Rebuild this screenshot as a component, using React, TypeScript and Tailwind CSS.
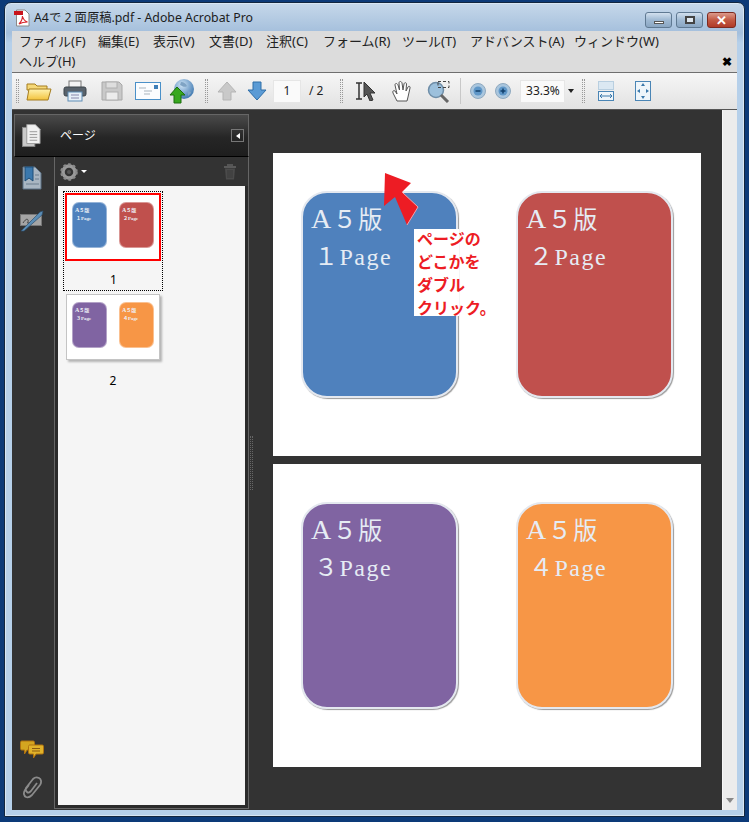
import React from 'react';

const uiFont = "font-['Noto_Sans','Noto_Sans_CJK_JP',sans-serif]";

const sheets = [
  [
    { label: 'A５版', page: '１Page', color: 'bg-[#4f81bd]' },
    { label: 'A５版', page: '２Page', color: 'bg-[#c0504d]' },
  ],
  [
    { label: 'A５版', page: '３Page', color: 'bg-[#8064a2]' },
    { label: 'A５版', page: '４Page', color: 'bg-[#f79646]' },
  ],
];

const menus = [
  { name: 'ファイル(F)', w: 'w-[79px]' },
  { name: '編集(E)', w: 'w-[55px]' },
  { name: '表示(V)', w: 'w-[56px]' },
  { name: '文書(D)', w: 'w-[57px]' },
  { name: '注釈(C)', w: 'w-[57px]' },
  { name: 'フォーム(R)', w: 'w-[79px]' },
  { name: 'ツール(T)', w: 'w-[68px]' },
  { name: 'アドバンスト(A)', w: 'w-[104px]' },
  { name: 'ウィンドウ(W)', w: 'w-[90px]' },
];

const Grip = ({ className }: { className: string }) => (
  <div className={`h-[24px] w-[3px] border-x border-dotted border-[#999] ${className}`}></div>
);

const PdfIcon = () => (
  <svg width="16" height="18" viewBox="0 0 16 18">
    <path d="M2.5 1H11l4 4v12H2.5z" fill="#fff" stroke="#8a8a8a" />
    <rect x="0" y="2" width="9" height="4" fill="#c8141c" />
    <path d="M5 15c2-2 3.5-5 3.5-8 .5 3 2 5 5 6-3 0-6 .5-8.500 2z" fill="none" stroke="#d8262c" strokeWidth="1.2" />
  </svg>
);

const Folder = () => (
  <svg width="26" height="22" viewBox="0 0 26 22">
    <defs>
      <linearGradient id="fold" x1="0" y1="0" x2="0" y2="1">
        <stop offset="0" stopColor="#fff3b0" />
        <stop offset="1" stopColor="#f2c23c" />
      </linearGradient>
    </defs>
    <path d="M1 4h8l2 2h10v4H1z" fill="#f5d878" stroke="#a57c1e" />
    <path d="M3 9h22l-3 11H1z" fill="url(#fold)" stroke="#a57c1e" />
  </svg>
);

const Printer = () => (
  <svg width="24" height="24" viewBox="0 0 24 24">
    <rect x="6" y="2" width="12" height="7" fill="#f4f4f4" stroke="#777" />
    <rect x="1" y="8" width="22" height="9" rx="2" fill="#59626b" stroke="#3d444b" />
    <rect x="5" y="13" width="14" height="9" fill="#e6f0f8" stroke="#5f8db5" />
    <path d="M8 16h8M8 19h8" stroke="#88a" />
  </svg>
);

const Floppy = () => (
  <svg width="22" height="22" viewBox="0 0 22 22">
    <path d="M1 2h17l3 3v15H1z" fill="#c9c9c9" stroke="#a8a8a8" />
    <rect x="5" y="2" width="11" height="6" fill="#dedede" stroke="#b0b0b0" />
    <rect x="5" y="12" width="12" height="8" fill="#ececec" stroke="#b0b0b0" />
  </svg>
);

const Mail = () => (
  <svg width="26" height="18" viewBox="0 0 26 18">
    <rect x="0.500" y="0.500" width="25" height="17" fill="#fafcfe" stroke="#4a90c8" />
    <rect x="19" y="3" width="4" height="4" fill="#3f7fb8" />
    <path d="M4 6h7M9 9h8M9 12h6" stroke="#a9b4bd" />
  </svg>
);

const Globe = () => (
  <svg width="26" height="26" viewBox="0 0 26 26">
    <defs>
      <radialGradient id="glb" cx="0.4" cy="0.3" r="0.8">
        <stop offset="0" stopColor="#cfe4f6" />
        <stop offset="1" stopColor="#2f6ca8" />
      </radialGradient>
    </defs>
    <circle cx="15" cy="11" r="10" fill="url(#glb)" />
    <path d="M12 4c3 0 5 2 6 4-2 2-5 0-7-1zM19 13c2 0 3 1 3 2l-3 3z" fill="#7fa3c4" />
    <path d="M8 9l8 8h-4v8H5v-8H1z" fill="#38a81e" stroke="#1d6e0e" />
  </svg>
);

const ArrowIcon = ({ up, color, edge }: { up: boolean; color: string; edge: string }) => (
  <svg width="20" height="20" viewBox="0 0 20 20">
    <path d={up ? 'M10 1l9 10h-5v8H6v-8H1z' : 'M10 19l9-10h-5V1H6v8H1z'} fill={color} stroke={edge} />
  </svg>
);

const SelectTool = () => (
  <svg width="24" height="20" viewBox="0 0 24 20">
    <path d="M1 2h6M1 18h6M4 2v16" stroke="#333" strokeWidth="1.500" fill="none" />
    <path d="M9 1l11 11h-5l3 7-3 1-3-7-3 3z" fill="#555" stroke="#333" />
  </svg>
);

const Hand = () => (
  <svg width="22" height="22" viewBox="0 0 22 22">
    <path
      d="M6 21l-4-8c-1-2 1-3 2-2l2 3-2-9c0-2 2-2 3 0l1.500 5L8 3c0-2 2.500-2 3 0l1 7 1-6c.5-2 2.500-1.500 2.500 0l-.5 7 2-4c1-1.500 2.500-.5 2 1l-2 9-1 4z"
      fill="#fff"
      stroke="#555"
      strokeLinejoin="round"
    />
  </svg>
);

const MarqueeZoom = () => (
  <svg width="24" height="24" viewBox="0 0 24 24">
    <circle cx="9" cy="11" r="7.500" fill="#9cc0dc" stroke="#6f8ea8" strokeWidth="1.500" />
    <path d="M14 16l7 7" stroke="#666" strokeWidth="3" />
    <rect x="11" y="2.500" width="11" height="6" fill="none" stroke="#444" strokeDasharray="3 2" />
  </svg>
);

const ZoomBtn = ({ plus }: { plus: boolean }) => (
  <svg width="16" height="16" viewBox="0 0 16 16">
    <circle cx="8" cy="8" r="7.500" fill="#a9c6de" stroke="#8fa9bf" />
    <circle cx="8" cy="8" r="4.500" fill="#5f97c8" />
    <path d={plus ? 'M5.500 8h5M8 5.500v5' : 'M5.500 8h5'} stroke="#12406c" strokeWidth="1.500" />
  </svg>
);

const FitWidth = () => (
  <svg width="16" height="20" viewBox="0 0 16 20">
    <rect x="0.500" y="0.500" width="15" height="8" fill="#dbe8f2" stroke="#b9cfe0" />
    <rect x="0.500" y="10.500" width="15" height="9" fill="#eef5fa" stroke="#4a85b5" />
    <path d="M2 15h12M2 15l2-2M2 15l2 2M14 15l-2-2M14 15l-2 2" stroke="#3b78aa" fill="none" />
  </svg>
);

const FitPage = () => (
  <svg width="16" height="20" viewBox="0 0 16 20">
    <rect x="0.500" y="0.500" width="15" height="19" fill="#eef5fa" stroke="#4a85b5" />
    <path d="M8 2l2 3H6zM8 18l2-3H6zM2 10l3-2v4zM14 10l-3-2v4z" fill="#3b78aa" />
  </svg>
);

const Pages = () => (
  <svg width="19" height="23" viewBox="0 0 20 24">
    <rect x="0.500" y="3.500" width="13" height="20" fill="#c9c9c9" stroke="#888" />
    <path d="M5 0.500h9l5 5v15H5z" fill="#f0f0f0" stroke="#999" />
    <path d="M8 8h8M8 11h8M8 14h8M8 17h8" stroke="#999" />
  </svg>
);

const Bookmark = () => (
  <svg width="20" height="24" viewBox="0 0 20 24">
    <path d="M1 1h12l6 6v16H1z" fill="#a9b6c2" stroke="#5d7387" />
    <path d="M3 1h8v14l-4-3-4 3z" fill="#3a78ad" stroke="#1f4f78" />
    <path d="M13 9h4M13 13h4M4 18h13" stroke="#6d7f8f" />
  </svg>
);

const Signature = () => (
  <svg width="24" height="22" viewBox="0 0 24 22">
    <rect x="0.500" y="4.500" width="21" height="11" fill="#a5a5a5" stroke="#777" />
    <path d="M3 13c2-3 4-5 5-3s-2 3 0 3 3-2 5-2" stroke="#444" fill="none" />
    <path d="M1 21L20 2l3-1-1 4L4 21z" fill="#5b8db5" stroke="#2c4f6e" strokeWidth="0.700" />
  </svg>
);

const Gear = () => (
  <svg width="18" height="18" viewBox="0 0 18 18">
    <circle cx="9" cy="9" r="6" fill="none" stroke="#9a9a9a" strokeWidth="3.500" />
    <circle cx="9" cy="9" r="7.500" fill="none" stroke="#8c8c8c" strokeWidth="2.500" strokeDasharray="2.500 2.400" />
    <circle cx="9" cy="9" r="2" fill="#555" />
  </svg>
);

const Trash = () => (
  <svg width="14" height="16" viewBox="0 0 14 16">
    <path d="M1 2h12v2H1z" fill="#5a5a5a" />
    <rect x="4" y="0" width="6" height="2" fill="#555" />
    <path d="M2 4.500h10l-1 11H3z" fill="#4b4b4b" />
    <path d="M5 6v8M7 6v8M9 6v8" stroke="#3a3a3a" />
  </svg>
);

const Comments = () => (
  <svg width="24" height="19" viewBox="0 0 24 19">
    <path d="M2 1h11c1 0 1.500.5 1.500 1.500v6c0 1-.5 1.500-1.500 1.500H7l-2.500 4V10H2c-1 0-1.500-.5-1.500-1.500v-6C.5 1.500 1 1 2 1z" fill="#d4a520" stroke="#b0720f" />
    <path d="M10 5h12c1 0 1.500.5 1.500 1.500v6c0 1-.5 1.500-1.500 1.500h-6l-2.500 4v-4H10c-1 0-1.500-.5-1.500-1.500v-6C8.500 5.500 9 5 10 5z" fill="#e0b22a" stroke="#b0720f" />
    <path d="M12 8.500h8M12 11h8" stroke="#8a5a10" />
  </svg>
);

const Clip = () => (
  <svg width="22" height="24" viewBox="0 0 22 24">
    <path
      d="M8 10l-4 5c-2 3-1 6 1 7s4 0 6-2l8-10c2-3 1-6-1-7s-4-1-6 1L5 13c-1 2 0 3 1 4s2 1 4-1l6-8"
      fill="none"
      stroke="#8b8b8b"
      strokeWidth="1.800"
    />
  </svg>
);

const Card = ({ label, page, color }: { label: string; page: string; color: string }) => (
  <div className={`h-[207px] w-[157px] rounded-[26px] border-2 border-[#e4e8ef] pl-[8px] pt-[11px] shadow-[1px_1px_1px_#9a9a9a] ${color}`}>
    <div className="font-['Liberation_Serif','Noto_Sans_CJK_JP',serif] text-[#e6ecf4]">
      <div className="text-[24px] leading-[30px] tracking-[1.500px]">
        <span className="text-[28px]">{label[0]}</span>
        {label.slice(1)}
      </div>
      <div className="ml-[3px] mt-[7px] text-[24px] leading-[30px] tracking-[1.500px]">{page}</div>
    </div>
  </div>
);

const Thumb = ({ label, page, color }: { label: string; page: string; color: string }) => (
  <div className={`h-[46px] w-[35px] rounded-[7px] border border-[#ffffff66] pl-[2px] pt-[3px] ${color}`}>
    <div className="font-['Liberation_Serif','Noto_Sans_CJK_JP',serif] text-[5px] font-bold leading-[8px] text-[#eef1f6]">
      <div>
        <span className="text-[6px]">{label[0]}</span>
        {label.slice(1)}
      </div>
      <div className="ml-[1px]">{page}</div>
    </div>
  </div>
);

export default function App() {
  return (
    <div className={`flex h-[822px] w-[749px] flex-col overflow-hidden bg-[#0c3a78] px-[4px] pb-[5px] pt-[2px] ${uiFont}`}>
      {/* window frame */}
      <div className="flex flex-1 flex-col rounded-t-[7px] border border-[#12263f] bg-[#b6d0ea] bg-[linear-gradient(180deg,#c6d8ea_0px,#a4bfdc_30px,#b6d0ea_40px)] shadow-[inset_0_0_0_1px_#d8e6f3]">
        {/* title bar */}
        <div className="relative flex h-[28px] shrink-0 items-center pl-[9px] pt-[2px]">
          <PdfIcon />
          <span className="ml-[4px] whitespace-nowrap text-[12.300px] leading-[18px] text-[#1c1c1c]">A4で 2 面原稿.pdf - Adobe Acrobat Pro</span>
          <div className="absolute right-[8px] top-[9px] flex gap-[4px]">
            <div className="flex h-[16px] w-[27px] items-end justify-center rounded-[3px] border border-[#5f7992] bg-[linear-gradient(180deg,#d2e0ee,#9fb9d3_50%,#8aa6c2)] pb-[3px]">
              <div className="h-[3px] w-[10px] border border-[#555] bg-white"></div>
            </div>
            <div className="flex h-[16px] w-[27px] items-center justify-center rounded-[3px] border border-[#5f7992] bg-[linear-gradient(180deg,#d2e0ee,#9fb9d3_50%,#8aa6c2)]">
              <div className="h-[8px] w-[10px] border-2 border-[#444] bg-[#dfe8f0]"></div>
            </div>
            <div className="flex h-[16px] w-[29px] items-center justify-center rounded-[3px] border border-[#7d2a20] bg-[linear-gradient(180deg,#dc9a8c,#c35a44_50%,#b03a28)] text-[13px] font-bold leading-none text-white">
              ✕
            </div>
          </div>
        </div>

        {/* client area */}
        <div className="mx-[7px] mb-[6px] flex flex-1 flex-col overflow-hidden">
          {/* menu */}
          <div className="relative h-[42px] shrink-0 border-b border-[#6f6f6f] bg-[#dcdcdc] pl-[7px] text-[13px] leading-[20px] text-[#222]">
            <div className="flex h-[20px] items-center">
              {menus.map((m) => (
                <span key={m.name} className={`whitespace-nowrap ${m.w}`}>
                  {m.name}
                </span>
              ))}
            </div>
            <div className="h-[20px]">ヘルプ(H)</div>
            <span className="absolute right-[5px] top-[21px] text-[12px] font-bold text-black">✖</span>
          </div>

          {/* toolbar */}
          <div className="flex h-[37px] shrink-0 items-center border-b border-[#555] bg-[linear-gradient(180deg,#f6f6f6,#e2e2e2)] text-[12px] text-[#222]">
            <Grip className="ml-[4px]" />
            <div className="ml-[7px]"><Folder /></div>
            <div className="ml-[11px]"><Printer /></div>
            <div className="ml-[14px]"><Floppy /></div>
            <div className="ml-[12px]"><Mail /></div>
            <div className="ml-[8px]"><Globe /></div>
            <Grip className="ml-[10px]" />
            <div className="ml-[9px]"><ArrowIcon up color="#c9c9c9" edge="#b5b5b5" /></div>
            <div className="ml-[10px]"><ArrowIcon up={false} color="#5b9bd5" edge="#2f6ea8" /></div>
            <div className="ml-[6px] flex h-[23px] w-[28px] items-center justify-center border border-[#e6e6e6] bg-[#fafafa]">1</div>
            <span className="ml-[8px] whitespace-nowrap">/ 2</span>
            <Grip className="ml-[17px]" />
            <div className="ml-[12px]"><SelectTool /></div>
            <div className="ml-[12px]"><Hand /></div>
            <div className="ml-[14px]"><MarqueeZoom /></div>
            <div className="ml-[9px] h-[26px] w-px bg-[#c8c8c8]"></div>
            <div className="ml-[9px]"><ZoomBtn plus={false} /></div>
            <div className="ml-[9px]"><ZoomBtn plus /></div>
            <div className="ml-[9px] flex h-[23px] w-[45px] items-center justify-center border border-[#e6e6e6] bg-[#fafafa]">33.3%</div>
            <div className="ml-[3px] h-0 w-0 border-x-[3px] border-t-[4px] border-x-transparent border-t-[#222]"></div>
            <Grip className="ml-[8px]" />
            <div className="ml-[13px]"><FitWidth /></div>
            <div className="ml-[21px]"><FitPage /></div>
          </div>

          {/* body */}
          <div className="flex flex-1 overflow-hidden bg-[#333]">
            {/* navigation panel */}
            <div className="flex w-[237px] shrink-0 flex-col pb-[1px] pl-[2px] pt-[4px]">
              <div className="flex h-[43px] shrink-0 items-center border border-[#666] border-b-black bg-[linear-gradient(180deg,#4a4a4a,#262626_55%,#1e1e1e)] pl-[7px] pr-[4px]">
                <Pages />
                <span className="ml-[19px] text-[12px] text-white">ページ</span>
                <div className="ml-auto flex h-[13px] w-[13px] items-center justify-center border border-[#777]">
                  <div className="h-0 w-0 border-y-[3px] border-r-[4px] border-y-transparent border-r-white"></div>
                </div>
              </div>
              <div className="flex flex-1 overflow-hidden">
                <div className="flex w-[40px] shrink-0 flex-col items-center pb-[10px] pr-[5px] pt-[9px]">
                  <Bookmark />
                  <div className="mt-[20px]"><Signature /></div>
                  <div className="mt-auto"><Comments /></div>
                  <div className="mt-[16px]"><Clip /></div>
                </div>
                <div className="flex flex-1 flex-col border-x border-b border-[#666] bg-[#2b2b2b] px-[3px] pb-[3px]">
                  <div className="-mx-[3px] flex h-[29px] shrink-0 items-center bg-[#333] pl-[3px] pr-[11px]">
                    <div className="ml-[2px]"><Gear /></div>
                    <div className="ml-[3px] h-0 w-0 border-x-[3px] border-t-[3px] border-x-transparent border-t-white"></div>
                    <div className="ml-auto"><Trash /></div>
                  </div>
                  <div className="flex-1 bg-[#f5f5f5] pl-[5px] pt-[5px]">
                    {/* first thumbnail, selected */}
                    <div className="h-[100px] w-[100px] border border-dotted border-black pl-[1px] pt-[1px]">
                      <div className="flex h-[68px] w-[96px] justify-between border-2 border-[#f00] bg-white px-[5px] pt-[7px]">
                        <Thumb {...sheets[0][0]} />
                        <Thumb {...sheets[0][1]} />
                      </div>
                      <div className="mt-[10px] text-center text-[12px] leading-[18px] text-black">1</div>
                    </div>
                    {/* second thumbnail */}
                    <div className="ml-[3px] mt-[3px] flex h-[66px] w-[94px] justify-between border border-[#c4c4c4] bg-white px-[5px] pt-[7px] shadow-[2px_2px_2px_#b5b5b5]">
                      <Thumb {...sheets[1][0]} />
                      <Thumb {...sheets[1][1]} />
                    </div>
                    <div className="mt-[12px] w-[100px] text-center text-[12px] leading-[18px] text-black">2</div>
                  </div>
                </div>
              </div>
            </div>

            {/* document view */}
            <div className="relative flex flex-1 flex-col gap-[8px] pl-[24px] pt-[43px]">
              <div className="absolute left-[1px] top-[326px] h-[54px] w-[3px] border-x border-dotted border-[#666]"></div>
              {sheets.map((cards, i) => (
                <div key={i} className="relative flex h-[303px] w-[428px] shrink-0 gap-[58px] bg-white pl-[28px] pt-[38px]">
                  {cards.map((c) => (
                    <Card key={c.page} {...c} />
                  ))}
                  {i === 0 && (
                    <>
                      <svg className="absolute left-[110px] top-[18px]" width="40" height="56" viewBox="0 0 40 56">
                        <path d="M2 2l26 10-9 9 16 15-11 18-12-28-11 9z" fill="#ed1c24" />
                        <path d="M19 21l16 15-11 18" fill="none" stroke="#f7a0a8" />
                      </svg>
                      <div className="absolute left-[141px] top-[76px] h-[87px] w-[45px] bg-white"></div>
                      <div className="absolute left-[144px] top-[74px] whitespace-nowrap font-['Noto_Sans_CJK_JP',sans-serif] text-[16px] font-bold leading-[23px] text-[#ed1c24]">
                        <div>ページの</div>
                        <div>どこかを</div>
                        <div>ダブル</div>
                        <div>クリック。</div>
                      </div>
                    </>
                  )}
                </div>
              ))}
            </div>

            {/* scrollbar */}
            <div className="flex w-[15px] shrink-0 flex-col items-center justify-end border-l border-[#f6f6f6] bg-[#ececec] pb-[7px]">
              <div className="h-0 w-0 border-x-[4px] border-t-[5px] border-x-transparent border-t-[#888]"></div>
            </div>
          </div>
        </div>
      </div>
    </div>
  );
}
